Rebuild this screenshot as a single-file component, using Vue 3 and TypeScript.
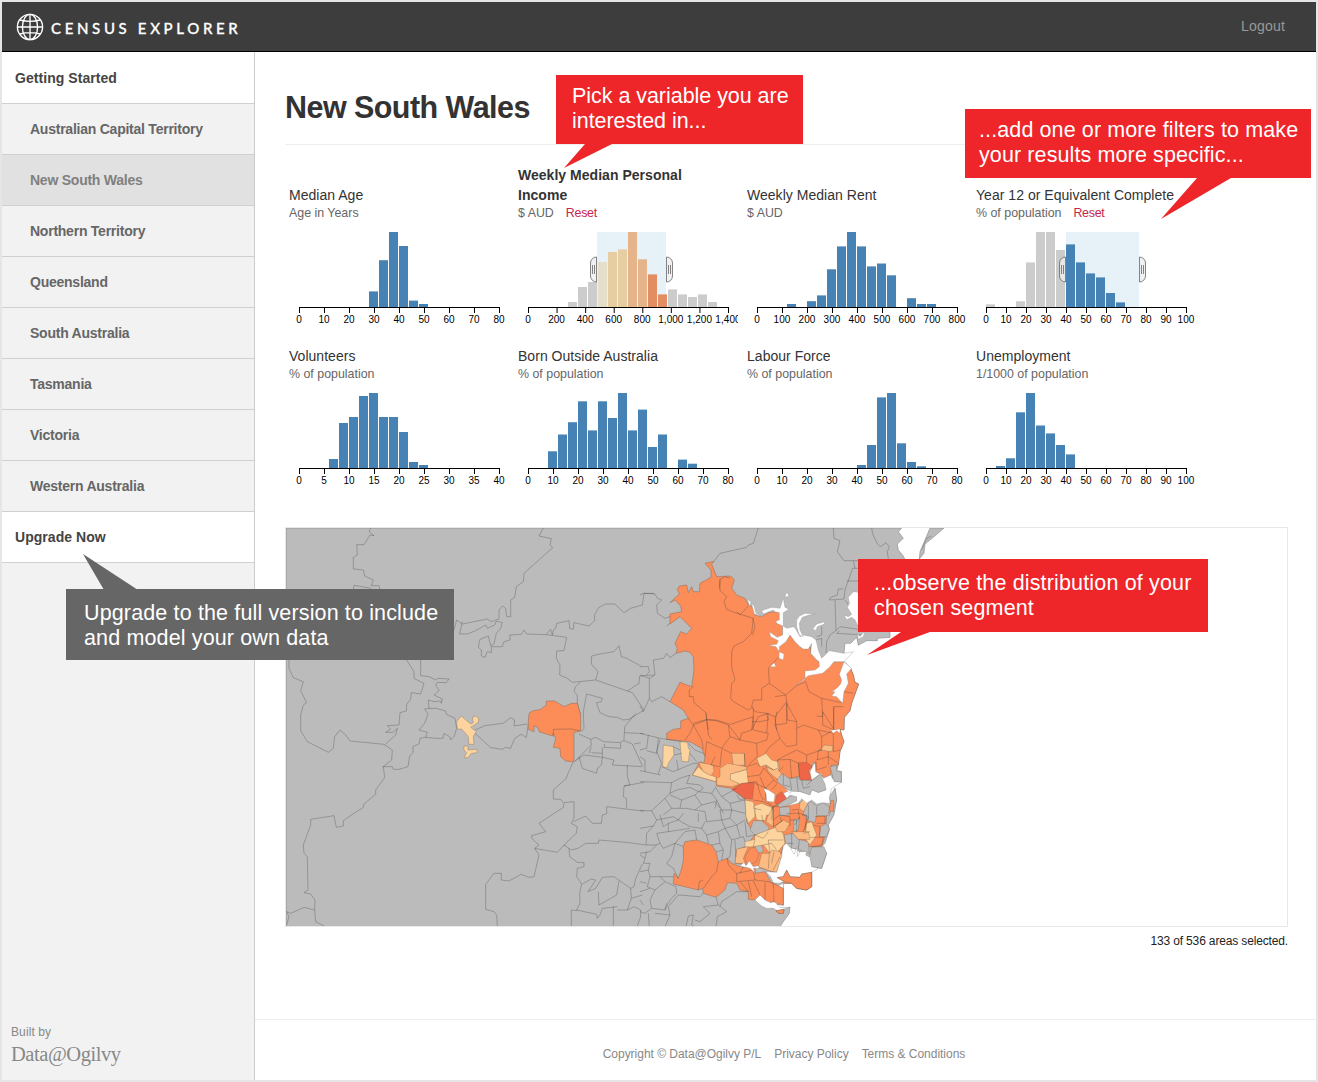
<script setup lang="ts">
interface Brush { from: number; to: number }
interface Chart {
  title: string
  unit: string
  ticks: string[]
  /** [x offset, height, optional fill] */
  bars: [number, number, string?][]
  active?: boolean
  brush?: Brush
}

const range = (max: number, step: number): string[] =>
  Array.from({ length: max / step + 1 }, (_, i) => (i * step).toLocaleString('en-US'))

const run = (start: number, heights: number[], fill?: string): [number, number, string?][] =>
  heights.map((h, i) => [start + i * 10, h, fill])

const off = '#ccc'

const charts: Chart[] = [
  { title: 'Median Age', unit: 'Age in Years', ticks: range(80, 10), bars: run(70, [15.6, 46.8, 75, 61, 6.4, 3]) },
  {
    title: 'Weekly Median Personal Income', unit: '$ AUD', ticks: range(1400, 200), active: true,
    brush: { from: 69, to: 138 },
    bars: [
      ...run(40, [5, 20, 25], off), ...run(70, [45], '#e5decb'), ...run(80, [55, 57.6], '#e6cda2'),
      ...run(100, [75, 47.7], '#e5b48a'), ...run(120, [32.6, 12.6], '#e38d63'),
      ...run(140, [17.6, 12.6, 10, 12.6, 5], off),
    ],
  },
  {
    title: 'Weekly Median Rent', unit: '$ AUD', ticks: range(800, 100),
    bars: [...run(30, [3]), ...run(50, [5.8, 11.6, 37.7, 60.6, 75, 60.6, 40.6, 43.5, 31.7]), ...run(150, [8.8, 3, 3])],
  },
  {
    title: 'Year 12 or Equivalent Complete', unit: '% of population', ticks: range(100, 10),
    brush: { from: 80, to: 153 },
    bars: [
      ...run(0, [2.7], off), ...run(30, [5.7, 44.6, 75, 75, 57], off),
      ...run(80, [62.6, 44.6, 33.6, 29.6, 14, 4.6]),
    ],
  },
  { title: 'Volunteers', unit: '% of population', ticks: range(40, 5), bars: run(30, [9, 45, 51, 72, 75, 51, 51, 36, 6, 3]) },
  {
    title: 'Born Outside Australia', unit: '% of population', ticks: range(80, 10),
    bars: [...run(20, [16.7, 33.5, 45.8, 66.7, 37.6, 66.7, 50, 75, 37.6, 58.4, 21, 33.5]), ...run(150, [8.4, 4.3])],
  },
  { title: 'Labour Force', unit: '% of population', ticks: range(80, 10), bars: run(100, [3, 23, 70.6, 75, 24.7, 6, 1.7]) },
  { title: 'Unemployment', unit: '1/1000 of population', ticks: range(100, 10), bars: run(10, [2, 9.7, 55.7, 75, 42.5, 34.6, 23, 13.6]) },
]

const tickX = (c: Chart, i: number): number => 10.5 + (i * 200) / (c.ticks.length - 1)
const handleEast = 'M.5 25A6 6 0 0 1 6.5 31V44A6 6 0 0 1 .5 50ZM2.5 33V42M4.5 33V42'
const handleWest = 'M-.5 25A6 6 0 0 0 -6.5 31V44A6 6 0 0 0 -.5 50ZM-2.5 33V42M-4.5 33V42'

const states = [
  'Australian Capital Territory', 'New South Wales', 'Northern Territory', 'Queensland',
  'South Australia', 'Tasmania', 'Victoria', 'Western Australia',
]

/* Map geometry is stored per sheet; each sheet uses units of a third of a pixel. */
const land = 'M-1062 24H785L775 35 790 55 772 72 775 90 790 108 800 130 780 200 760 300 750 335 750 352 712 355 712 362 680 362 655 376 650 352 632 370 615 370 612 400 612 425 632 445 640 465 645 487 656 492 635 550 630 572 613 592 612 630 600 628 606 648 612 665 600 695 595 735 590 752 604 755 604 787 583 785 580 765 572 800 568 830 575 828 585 805 590 840 582 885 565 915 568 930 555 970 545 980 560 1000 545 1045 515 1040 505 1010 470 990 440 970 430 977 410 1057 390 1055 415 1075 440 1050 450 1072 480 1072 485 1062 515 1057 515 1100 500 1110 470 1105 455 1090 430 1090 430 1155 415 1152 395 1165 450 1162 448 1180 430 1205 420 1220H-1062ZM870 24H912L880 52 855 72 852 100 838 117 840 95 855 60Z'

const north = 'M195 130L222 124 215 133 230 170 272 168 283 180 275 205 290 225 315 235 325 255 340 262 345 285 365 290 385 278 405 275 428 280 428 360 440 362 450 345 482 382 512 382 512 400 537 425 545 460 582 425 612 425 632 445 640 465 645 487 656 492 635 550 630 572 613 592 612 630 600 628 606 648 612 665 600 695 595 735 575 735 572 765 550 775 545 765 527 755 525 725 515 735 515 780 475 770 450 775 412 765 412 780 455 812 440 825 410 855 395 865 400 858 480 848 500 870 560 885 555 950 545 980 515 980 430 975 410 1057 380 1050 330 1035 285 1030 290 990 315 980 345 945 320 905 315 838 275 805 230 798 228 785 157 765 180 725 192 730 195 710 185 685 150 665 80 658 80 640 100 628 122 625 122 603 145 595 130 570 90 545 120 487 155 500 162 450 160 410 148 396 135 393 108 400 112 385 105 370 122 335 140 342 155 325 120 290 90 312 90 282 125 275 122 258 105 240 90 248 118 222 112 208 118 198 140 195 145 218 155 200 160 215 178 215 180 190 213 172 213 150Z'

const water = [
  'M545 415L568 392 612 400 640 395 612 425 582 425 570 440 548 460 505 467 467 497 495 478 495 453 525 450 538 440 537 425 528 418 512 400 515 370 505 387 490 387 480 380 465 365 450 345 438 365 418 380 418 395 432 402 430 420 417 415 418 395 408 380 385 376 410 373 415 362 392 350 388 335 412 352 428 345 428 318 410 310 408 303 418 300 418 278 405 275 400 270 370 282 365 272 395 262 420 265 430 235 435 262 447 268 430 278 430 318 440 325 460 320 466 325 480 350 490 345 515 350 528 360 535 390Z',
  'M612 425L598 463 605 480 602 492 590 505 575 515 585 515 575 528 590 530 608 550 612 515 625 490 620 462 635 445Z',
  'M390 440L402 428 408 440ZM434 230L441 215 447 230Z',
  'M470 300L478 288 495 280 525 282 505 286 487 292 478 310 480 330 490 350 478 345 470 320Z',
  'M518 327L530 312 555 305 552 313 532 320 528 332Z',
  'M655 217L640 215 625 232 628 250 622 262 635 283 625 290 612 285 620 299 635 292 645 300 655 320Z',
  'M322 238L333 245 330 260ZM334 250L342 258 348 280 365 290 343 282ZM572 631L600 627 600 640 590 632 580 640Z',
  'M668 340L674 337 670 350 655 358 652 340 660 350Z',
]

const harbour = [
  'M520 195L525 190 527 215 545 225 550 235 572 225 583 245 604 247 575 265 568 293 570 310 548 308 530 312 515 300 500 310 485 296 475 310 440 318 470 303 470 290 450 285 440 295 430 280 445 273 480 275 510 285 516 270 535 278 558 270 555 252 545 232 545 218 515 240 510 215Z',
  'M370 265L385 270 405 283 402 306 380 304 378 280ZM435 265L455 275 450 280Z',
  'M430 437L440 430 452 445 462 463 472 440 472 470 480 455 500 455 497 465 510 472 515 500 535 505 515 517 485 522 480 532 450 530 440 510 430 530 412 533 433 545 415 550 400 548 392 530 378 515 410 517 425 470Z',
  'M300 498L312 487 318 497 328 483 340 500 355 497 358 505 340 505 345 518 330 505Z',
  'M345 600L360 585 375 600 392 608 402 605 400 565 430 550 430 615 410 612 420 622 450 622 412 632 400 625 380 625 365 618Z',
]

const south = 'M135 425L170 420 215 435 228 455 235 485 262 475 275 490 300 500 345 505 347 520 375 515 392 545 400 550 430 565 430 615 403 613 402 605 385 608 375 600 360 585 345 600 325 598 325 575 300 570 290 550 262 548 255 570 228 592 190 580 188 565 175 570 100 552 102 520 115 535 125 505 130 480 130 440ZM412 533L430 530 440 510 450 530 480 532 485 522 515 517 515 560 500 570 470 565 455 550 430 550ZM408 632L432 628 430 640 415 640Z'
/* Islands of headland drawn back over the bays. */
const southTop = 'M400 550L430 565 430 615 410 610 402 605ZM412 533L430 530 440 510 450 530 480 532 485 522 515 517 515 560 500 570 470 565 455 550 433 545ZM408 632L432 628 430 640 415 640Z'

const patches: { fill: string; d: string[] }[] = [
  {
    fill: '#bbb', d: [
      'M412 225L430 222 450 237 470 232 485 240 515 242 545 220 545 232 556 252 558 270 535 278 516 270 510 285 480 275 450 275 412 245Z',
      'M412 312L435 298 460 285 470 290 470 305 440 318 418 322ZM418 322L450 320 450 345 420 347Z',
      'M495 325L510 303 530 318 548 308 570 322 570 345 555 348 530 347 525 368 503 362 490 340Z',
      'M462 358L478 357 475 390 460 395Z', 'M432 405L460 400 475 418 505 425 508 460 490 455 475 447 455 445 437 430Z',
      'M340 362L365 362 388 383 380 395 345 405 330 390ZM345 438L365 435 370 455 348 460Z',
      'M542 380L558 370 568 385 560 410 538 410Z', 'M515 442L552 440 560 460 545 505 515 500 508 470Z',
      'M570 200L590 197 590 212 604 215 604 247 583 245Z', 'M568 290L585 265 590 300 580 325 565 340 572 310Z',
    ],
  },
  {
    fill: '#fdd49e', d: [
      'M70 135L100 140 102 165 85 190 82 203 68 200ZM120 125L143 127 145 145 150 148 145 185 125 184Z',
      'M157 225L175 200 192 215 228 232 228 245ZM270 222L320 208 325 248 300 253 270 240Z',
      'M350 175L378 160 395 180 415 185 418 207 400 210 378 195 360 200Z',
      'M315 300L340 305 345 325 345 350 325 370 318 350ZM340 318L365 310 395 322 395 345 380 345 375 362 350 360Z',
      'M345 405L385 390 412 380 430 402 435 430 410 460 390 460 370 435 340 440Z', 'M315 425L345 418 340 440 315 442Z',
      'M500 370L515 365 530 405 510 435 495 415Z',
    ],
  },
  {
    fill: '#fdbb84', d: [
      'M275 160L313 160 315 195 280 198ZM175 187L220 195 222 215 212 227 190 215Z',
      'M240 205L262 190 320 200 320 208 272 222 270 238 300 253 275 260 230 255 230 235 240 230Z',
      'M540 150L553 135 580 138 575 155Z', 'M378 195L400 210 412 205 425 222 412 238 385 215Z',
      'M480 310L490 298 505 308 490 335 478 325Z', 'M405 380L430 360 450 370 435 395 412 395Z',
      'M455 395L505 395 510 418 475 418Z', 'M290 447L325 440 310 475 315 490 285 490Z',
      'M365 460L388 460 395 450 420 455 425 470 410 517 388 512 355 500Z', 'M383 350L400 320 400 380 378 365Z',
    ],
  },
  { fill: '#fc8d59', d: ['M315 470L330 445 345 442 357 460 350 485 320 498Z', 'M573 302L581 300 581 335 568 332Z'] },
  { fill: '#ef6548', d: ['M275 268L305 250 343 247 337 298 315 295ZM475 188L500 187 518 200 505 210 515 240 480 240ZM405 310L410 285 425 275 440 295 412 315Z'] },
]

const westLines = [
  '260,24 255,35 270,47 258,45 240,74 218,74 220,105 208,112 208,147 238,150 242,168 268,180 262,197 285,197 288,210', '262,205 210,196 208,207',
  '778,24 765,48 802,56 798,75 806,83 720,160 718,185 697,200 692,232 680,240 680,290 668,290 665,265 656,258 645,270 645,297 622,305 610,297 535,312 518,300',
  '518,300 510,330', '535,305 527,342 550,342 575,332 605,315 610,325 632,315 637,303 655,308 650,325 637,340 630,372 620,377 613,348 588,358 583,382 592,390 592,408 603,412 610,395 622,398 622,380 655,380 660,365 678,360 678,345 712,343 720,330 728,342 787,344 848,352 840,392 818,393 817,415 828,435 827,465 850,475 865,487 935,480 1030,513 1065,490 1067,468 1110,465',
  '787,343 800,328 805,345 808,330 815,325 818,310 855,302 857,325 868,328 870,308 915,318 932,302 932,283 945,262 965,252 992,252 1020,278 1040,265 1075,255 1080,220 1110,220',
  '935,480 942,455 922,432 923,408 942,403 990,395 1005,377 1012,410 1028,415 1070,438',
  '890,485 875,500 870,515 880,525 880,550 890,585', '893,635 900,625 898,575 908,522 955,535 952,545 937,548 948,578 975,590 1000,592 1018,600 1035,598 1080,570 1045,518 1030,513', '1055,580 1022,620 1020,660', '1022,638 1080,641',
  '15,420 15,445 28,473 58,485 50,512 68,548 58,555 50,585 50,632 70,665 90,675 133,697 148,685 152,650 168,630 185,645 198,663 300,673 325,690 323,720 298,740 302,772 275,810 275,823 240,852 238,862 198,888 178,902 178,918 157,922 150,887 80,898 80,915 58,975 60,1000 70,1010 72,1110 60,1118 80,1122 93,1140 92,1170 60,1162 20,1180 8,1175 15,1190 8,1215', '92,1170 95,1205 120,1218',
  '368,420 390,455 390,475 420,490 410,522 382,518 380,538 368,553 367,573 348,578 345,615 310,617 320,627 305,637 327,637 340,625 335,645 305,672',
  '410,420 410,467 435,470 455,480 462,475 495,477 487,488 460,487 455,495 465,512 450,525 475,537 472,550 470,543 450,545 433,540 435,565 422,567 432,582 422,610 405,630 430,637 425,652 408,655 405,672 387,680 387,698 377,708 372,740 345,748 328,748 325,740 295,740',
  '435,565 457,565 485,573 487,583 513,595 518,625 510,650 500,660 497,650 480,640 477,655 455,655 425,652',
  '573,630 602,617 657,610 680,593 692,600 690,618 730,612', '573,640 590,655 620,683 655,688 665,682 680,685 692,655 712,643 727,653 733,612',
  '868,725 850,765 847,775 808,810 808,837 830,838 840,850 838,862 765,910 785,935 743,947 743,955 765,975 752,985 765,1005 750,1070 735,1072 712,1063 675,1083 652,1080 652,1060 630,1060 605,1093 605,1168 630,1175 638,1185 640,1218',
  '752,985 820,997 840,975 862,990 882,985 905,970 943,970 945,960 1035,968 1085,975', '840,848 870,845 870,893 862,910 880,920 877,940 850,965 840,978',
  '868,905 905,888 925,910 952,910 955,885 968,882 968,860 1050,870 1080,873', '1028,865 1027,835 1018,830 1020,798 1080,787', '855,985 857,1010 880,1027 900,1028 900,1040 880,1045 878,1070 893,1092 887,1120 888,1150 878,1170 938,1183 940,1195 948,1185 955,1165 1000,1160', '895,1092 922,1077 935,1080 912,1115 935,1105 955,1072 990,1070 1040,1105 1050,1100 1055,1075 1075,1032', '1005,1083 998,1125 945,1155 943,1115', '862,1218 862,1170 880,1172', '988,1160 988,1218', '1000,1170 1030,1170 1050,1160 1070,1170 1070,1190 1060,1218', '1030,1170 1042,1135 1040,1105', '1042,1135 1075,1125',
  '885,642 920,658 922,675 875,722', '920,658 935,652 960,665 1010,668 1010,685 960,682 962,672', '870,725 900,705 955,712 952,735 940,745 938,760 895,745 885,710', '922,680 915,700', '922,698 955,700', '955,683 955,712 990,720 985,735 1075,740', '1010,665 1020,662 1045,672 1058,700 1075,738', '1030,735 1030,770 1038,795 1020,798', '1050,672 1070,668',
]

const northLines = [
  '355,24 340,70 325,75 320,82 240,100 222,124', '580,24 582,55 600,62 592,95 612,122 655,122', '695,24 698,42 712,72 722,80 738,68 748,80 742,95 745,117', '845,90 860,55 875,48',
  '655,145 638,145 615,210 612,237 568,240 572,232 592,225 595,207 610,207', '620,183 655,183', '585,240 588,332 600,320 655,328', '615,240 633,265', '588,332 570,345 560,365 558,400', '528,360 545,355 545,380', '545,320 545,345 530,350', '598,332 590,340 670,345', '640,122 645,145',
  '240,178 240,212 260,230 252,245 260,268 285,278 340,295 335,340 310,365 282,378 275,395 275,440 285,480 275,490 272,535 280,545 325,570 340,560', '290,275 300,285 325,258', '238,205 240,178 255,170 270,175', '338,295 345,320 338,345',
  '160,500 148,510 148,530 160,530 162,548 198,578 200,598 228,600 272,613 340,590', '90,545 65,530 35,545 28,535 28,475 45,465 40,420 70,415 80,400 90,413 108,400', '28,475 0,465', '0,440 25,440 28,455 20,465', '28,535 10,575', '0,225 10,220 45,222 52,235 65,240 50,255 52,280 75,295 90,290', '80,318 90,310', '0,558 10,575',
  '415,412 385,445 388,490 365,505 365,540 340,540 335,560 345,575 380,580 405,590 440,545 437,525 388,490', '437,525 405,530', '437,525 470,497 497,485 507,515 545,535 548,590 530,588', '548,575 580,625', '610,560 582,560 580,630', '545,535 605,548', '612,515 640,520', '440,545 442,600 470,605', '340,590 340,630', '380,580 385,600 360,605 335,605', '405,590 410,630', '160,610 200,598 205,630',
]

const metroLines = [
  '198,38 200,60 228,62 265,75 300,120 305,100 335,90 340,48', '265,75 270,110 245,145 200,125 195,170', '160,75 200,60', '160,75 150,100 135,120', '160,75 185,120 190,148', '200,60 205,105 215,118', '145,55 160,75', '245,145 275,160', '270,110 300,120 350,130 380,120 385,100 340,90', '340,48 340,25', '335,90 355,50 385,40 380,100', '410,35 405,75 440,70 440,10 470,65 470,135 440,140 420,115 405,75', '470,85 490,75 535,90 545,110 545,150 500,165 470,150', '548,35 548,75 582,90 580,20', '582,90 600,88', '545,110 582,90', '545,150 535,150 532,180', '535,90 580,100', '470,150 430,170 412,180 415,205', '375,160 390,140 420,115', '350,130 352,170 325,195', '313,160 315,200', '320,200 350,190 360,200', '245,150 240,200', '225,170 213,195 238,200', '322,230 360,225 372,203 402,240 375,265 360,230', '325,248 350,245 360,280 370,300', '345,250 380,265 375,300 395,315', '402,240 412,250 395,270', '412,180 450,178 455,235', '450,178 475,190 478,232', '430,200 415,215', '500,165 500,187', '340,300 370,305 400,320 415,320', '400,320 400,380 430,360', '400,360 418,345 450,350 450,378', '440,340 480,340 505,350 490,395', '455,330 475,328 478,357', '485,345 500,345 495,390', '565,155 565,195', '530,180 565,170 595,190', '528,185 530,210 560,200', '580,100 580,155 600,150',
  '520,375 540,380 538,410', '525,350 555,348 555,370 530,370', '510,412 550,412 545,435 515,440', '420,350 425,365', '450,360 470,360 470,395', '480,350 465,375', '490,400 510,395', '505,315 505,360', '530,320 530,345', '450,240 455,270', '470,232 475,275', '485,240 490,265 510,260', '515,242 500,255', '430,222 430,255 450,260', '455,400 455,445', '478,420 475,447', '440,430 460,430',
  '378,200 400,210', '385,420 390,460', '385,420 430,420', '370,435 395,430 410,450', '345,405 370,415 385,395', '365,345 370,365', '342,325 365,330', '398,322 395,360', '388,460 385,505', '402,455 395,490', '420,470 400,510',
  '235,485 230,515 215,530 190,565', '262,475 265,495 290,520 290,545', '290,520 340,510 345,540 290,545', '345,540 385,545 400,550', '300,545 325,575', '325,545 335,590', '340,543 360,585', '375,548 375,600', '400,550 402,605', '310,500 300,520', '485,522 485,540 460,545', '175,570 178,545 190,540', '400,565 430,565',
  '0,100 60,115 80,118', '25,105 20,145 0,150', '55,115 50,160 20,152', '60,120 50,155 65,190', '80,118 125,125', '0,170 15,180 15,215 62,225', '65,190 55,222', '15,215 0,212', '65,200 100,215 160,190 175,190', '100,140 120,150', '102,165 125,160', '110,180 115,210', '145,130 165,150 190,160', '150,160 170,185', '0,245 95,248 120,235 150,225', '95,248 90,280 110,270 150,262 175,275 190,265 180,255 140,250 150,225',
  '0,332 35,332 75,295 90,280', '35,332 50,360 40,378 0,385', '50,360 100,350 115,360', '75,295 95,325 70,345', '90,285 125,300 120,325 95,325', '125,300 165,285 185,315 165,330 140,325 120,325', '165,285 175,275 215,280 225,265', '185,315 225,305 240,325', '215,280 230,300 225,325', '225,260 245,290 290,265', '245,290 270,310 315,300', '270,310 275,330 240,330', '240,330 245,360 200,365 195,335 165,330', '275,330 315,340', '245,360 270,355 290,375 315,360', '270,355 275,330', '195,365 185,385 150,380 115,360 130,340', '245,360 255,385 290,375', '185,385 200,405 235,395 255,385', '40,378 20,400 18,435 48,435 60,430 50,400 85,395 85,370 115,360', '60,430 70,445 105,430 135,395 165,390', '85,395 150,385', '0,460 30,455 50,435', '105,430 95,470 80,490 100,505 115,535', '105,430 130,440', '165,390 170,420', '200,405 205,430', '235,395 240,430 215,435', '255,385 275,420 310,410 315,425', '290,375 300,410', '240,430 250,450 230,455', '275,420 270,470 262,475', '285,420 288,470', '250,450 245,480', '315,365 320,410 345,405', '175,340 175,365', '60,345 70,380 85,370', '230,300 250,340',
  '0,465 15,475 10,490 30,490 25,510 0,515', '25,510 30,530 100,530', '30,530 22,560 45,570 30,600 35,625 75,630 90,600 110,580 108,560 75,545', '0,575 30,565', '0,545 20,550', '35,625 15,640 0,635', '45,570 75,545 60,530', '75,630 80,610', '190,580 180,590 115,585 85,620 90,645 75,680', '228,592 235,615 190,620 210,640 180,665 165,660', '138,680 145,648 160,645 155,675 165,680', '235,615 260,635 232,650 228,680', '240,620 245,605 290,575 325,575', '315,295 300,300 290,285', '15,475 20,455', '0,600 10,615', '25,640 28,680', '45,640 90,645',
]

const poly = (pts: string): string => `M${pts.replace(/ /g, 'L')}`
</script>

<template>
  <div class="frame">
    <header class="top">
      <div class="brand">
        <svg width="28" height="28" viewBox="0 0 28 28" fill="none" stroke="#fff" stroke-width="1.35">
          <circle cx="14" cy="14" r="12.6" />
          <ellipse cx="14" cy="14" rx="7.6" ry="12.6" />
          <path d="M14 1.4V26.6M1.4 14H26.6M3.9 7C10 8.6 18 8.6 24.1 7M3.9 21C10 19.4 18 19.4 24.1 21" />
        </svg>
        <span>CENSUS EXPLORER</span>
      </div>
      <a class="logout">Logout</a>
    </header>

    <div class="body">
      <aside class="side">
        <nav>
          <a class="item root first">Getting Started</a>
          <a v-for="s in states" :key="s" class="item" :class="{ current: s === 'New South Wales' }">{{ s }}</a>
          <a class="item root">Upgrade Now</a>
        </nav>
        <div class="built">Built by<span>Data@Ogilvy</span></div>
      </aside>

      <main class="main">
        <section class="content">
          <h1>New South Wales</h1>
          <div class="charts">
            <div v-for="c in charts" :key="c.title" class="chart">
              <div class="label">
                <div class="title" :class="{ active: c.active }">{{ c.title }}</div>
                <div class="unit">{{ c.unit }}<a v-if="c.brush" class="reset">Reset</a></div>
              </div>
              <svg class="plot" width="220" height="100" viewBox="0 0 220 100">
                <rect v-if="c.brush" :x="c.brush.from + 10" y="0" :width="c.brush.to - c.brush.from" height="75" fill="#e6f1f8" />
                <rect v-for="b in c.bars" :key="b[0]" :x="b[0] + 10" :y="75 - b[1]" width="9" :height="b[1]" :fill="b[2] ?? '#4682b4'" />
                <g v-if="c.brush" fill="#eee" stroke="#666">
                  <path :d="handleWest" :transform="`translate(${c.brush.from + 10} 0)`" fill-opacity=".8" stroke-opacity=".8" />
                  <path :d="handleEast" :transform="`translate(${c.brush.to + 10} 0)`" fill-opacity=".8" stroke-opacity=".8" />
                </g>
                <path d="M10.5 81V75.5H210.5V81" fill="none" stroke="#000" />
                <g v-for="(t, i) in c.ticks" :key="t">
                  <path :d="`M${tickX(c, i)} 75V81`" stroke="#000" />
                  <text :x="tickX(c, i) - 0.5" y="91">{{ t }}</text>
                </g>
              </svg>
            </div>
          </div>

          <div class="map">
            <svg width="1001" height="398" viewBox="286 528 1001 398">
              <g transform="translate(640 520) scale(.33333)">
                <path :d="land" class="grey" />
                <path :d="north" class="orange" />
              </g>
              <g transform="translate(640 700) scale(.33333)">
                <path :d="south" class="orange" />
                <g v-for="p in patches" :key="p.fill" :fill="p.fill" class="edge">
                  <path v-for="d in p.d" :key="d" :d="d" />
                </g>
                <path v-for="l in metroLines" :key="l" :d="poly(l)" class="line" />
                <path v-for="w in harbour" :key="w" :d="w" class="water" />
                <path :d="southTop" class="orange" />
              </g>
              <g transform="translate(640 520) scale(.33333)">
                <path v-for="l in northLines" :key="l" :d="poly(l)" class="line" />
                <path v-for="w in water" :key="w" :d="w" class="water" />
              </g>
              <g transform="translate(284 520) scale(.33333)">
                <path v-for="l in westLines" :key="l" :d="poly(l)" class="line" />
                <path class="orange" d="M733 605L735 580 745 573 770 568 787 555 787 543 812 543 840 560 862 550 880 550 890 585 890 633 870 637 870 725 845 723 830 710 828 685 808 682 815 655 808 640 805 648 765 635 762 622 750 618 750 635 733 628Z" />
                <path class="line" d="M808 650V628L860 627 890 633" />
                <path class="edge" fill="#fdd49e" d="M518 605L532 588 560 612 568 608 565 593 575 588 584 595 583 607 568 617 560 622 577 635 568 648 570 673 555 673 553 650 533 627 520 627ZM540 678L552 678 552 690 578 688 580 698 562 700 552 713 540 713 548 698 540 690Z" />
              </g>
            </svg>
          </div>
          <div class="count">133 of 536 areas selected.</div>
        </section>

        <footer class="foot">
          <span>Copyright © Data@Ogilvy P/L</span><a>Privacy Policy</a><a>Terms &amp; Conditions</a>
        </footer>
      </main>
    </div>

    <div class="callout c1">Pick a variable you are<br />interested in...
      <svg width="40" height="24" viewBox="0 0 40 24"><path d="M21 0H48L0 24Z" /></svg>
    </div>
    <div class="callout c2">...add one or more filters to make<br />your results more specific...
      <svg width="70" height="41" viewBox="0 0 70 41"><path d="M36 0H70L0 41Z" /></svg>
    </div>
    <div class="callout c3">...observe the distribution of your<br />chosen segment
      <svg width="63" height="23" viewBox="0 0 63 23"><path d="M34 0H63L0 23Z" /></svg>
    </div>
    <div class="callout c4">Upgrade to the full version to include<br />and model your own data
      <svg width="56" height="36" viewBox="0 0 56 36"><path d="M21 36H55L0 0Z" /></svg>
    </div>
  </div>
</template>

<style>
body { background: #e5e5e5; }
</style>

<style scoped>
.frame {
  position: relative;
  box-sizing: border-box;
  width: 1318px;
  height: 1082px;
  border: 2px solid #e5e5e5;
  background: #fff;
  display: flex;
  flex-direction: column;
  overflow: hidden;
  font-family: "Liberation Sans", Arial, sans-serif;
  color: #333;
}
.top {
  box-sizing: border-box;
  height: 50px;
  flex: none;
  background: #3d3d3d;
  border-bottom: 1px solid #000;
  display: flex;
  justify-content: space-between;
  align-items: center;
  padding: 0 31px 0 14px;
}
.brand { display: flex; align-items: center; gap: 7px; padding-top: 1px; }
.brand span { font: 500 15px/20px Lato, sans-serif; letter-spacing: 3.65px; color: #fff; padding-top: 2px; -webkit-text-stroke: .3px #fff; }
.logout { font-size: 14px; letter-spacing: .18px; color: #999; padding-bottom: 1px; }
.body { flex: 1; display: flex; min-height: 0; }
.side {
  box-sizing: border-box;
  width: 253px;
  background: #f2f2f2;
  border-right: 1px solid #ccc;
  display: flex;
  flex-direction: column;
  justify-content: space-between;
}
.item {
  display: block;
  box-sizing: border-box;
  height: 51px;
  line-height: 51px;
  border-bottom: 1px solid #d0d0d0;
  padding-left: 28px;
  font-size: 14px;
  font-weight: bold;
  letter-spacing: -.24px;
  color: #666;
}
.item.root { background: #fff; color: #444; padding-left: 13px; letter-spacing: .05px; }
.item.first { height: 52px; line-height: 53px; }
.item.current { background: #e1e1e1; color: #808080; }
.built { padding: 0 0 13px 9px; font-size: 12px; line-height: 18px; letter-spacing: .1px; color: #888; }
.built span { display: block; font: 20.5px/26px "Liberation Serif", serif; letter-spacing: -.45px; }
.main { flex: 1; display: flex; flex-direction: column; justify-content: space-between; min-width: 0; }
.content { padding: 0 28px 0 30px; }
h1 {
  margin: 0;
  box-sizing: border-box;
  height: 93px;
  padding-top: 37px;
  border-bottom: 1px solid #eee;
  font-size: 30.5px;
  line-height: 36px;
  letter-spacing: -.55px;
}
.charts { display: grid; grid-template-columns: repeat(4, 229px); grid-template-rows: 188px 161px; padding-left: 4px; }
.chart { display: flex; flex-direction: column; justify-content: flex-end; padding-bottom: 1px; }
.title { width: 205px; font-size: 14px; line-height: 20px; letter-spacing: .03px; }
.title.active { width: 180px; font-weight: bold; }
.unit { font-size: 12.4px; line-height: 16px; color: #666; }
.reset { color: #c7254e; margin-left: 12px; letter-spacing: -.25px; }
.plot { display: block; margin-top: 11px; overflow: hidden; }
.plot text { font-size: 10px; text-anchor: middle; fill: #000; letter-spacing: .05px; }
.map { margin-top: 33px; width: 1001px; height: 398px; border: 1px solid #e8e8e8; overflow: hidden; }
.map svg { display: block; }
.grey { fill: #bbb; stroke: #777; stroke-width: 1.5; }
.orange { fill: #fc8d59; stroke: #8a6a55; stroke-width: 1.5; }
.edge { stroke: #77664f; stroke-width: 1.5; stroke-opacity: .7; }
.line { fill: none; stroke: #333; stroke-opacity: .5; stroke-width: 1.7; }
.water { fill: #fff; stroke: #888; stroke-width: 1; }
.count { margin-top: 6px; text-align: right; font-size: 12px; line-height: 16px; letter-spacing: -.15px; color: #222; }
.foot {
  box-sizing: border-box;
  height: 61px;
  border-top: 1px solid #eee;
  display: flex;
  justify-content: center;
  gap: 13px;
  padding: 26px 3px 0 0;
  font-size: 12px;
  line-height: 16px;
  letter-spacing: -.02px;
  color: #888;
}
.callout {
  position: absolute;
  box-sizing: border-box;
  background: #ee2529;
  color: #fff;
  font-size: 21.5px;
  line-height: 25px;
  white-space: nowrap;
}
.callout svg { position: absolute; overflow: visible; fill: #ee2529; }
.c1 { left: 554px; top: 73px; width: 247px; height: 69px; padding: 9px 0 0 16px; letter-spacing: -.04px; }
.c1 svg { left: 8px; top: 69px; }
.c2 { left: 963px; top: 107px; width: 346px; height: 69px; padding: 9px 0 0 14px; letter-spacing: .11px; }
.c2 svg { left: 196px; top: 69px; }
.c3 { left: 856px; top: 557px; width: 350px; height: 73px; padding: 12px 0 0 16px; letter-spacing: .16px; }
.c3 svg { left: 9px; top: 73px; }
.c4 { left: 64px; top: 587px; width: 388px; height: 71px; padding: 12px 0 0 18px; letter-spacing: .14px; background: #666; }
.c4 svg { left: 17px; top: -35px; fill: #666; }
</style>
